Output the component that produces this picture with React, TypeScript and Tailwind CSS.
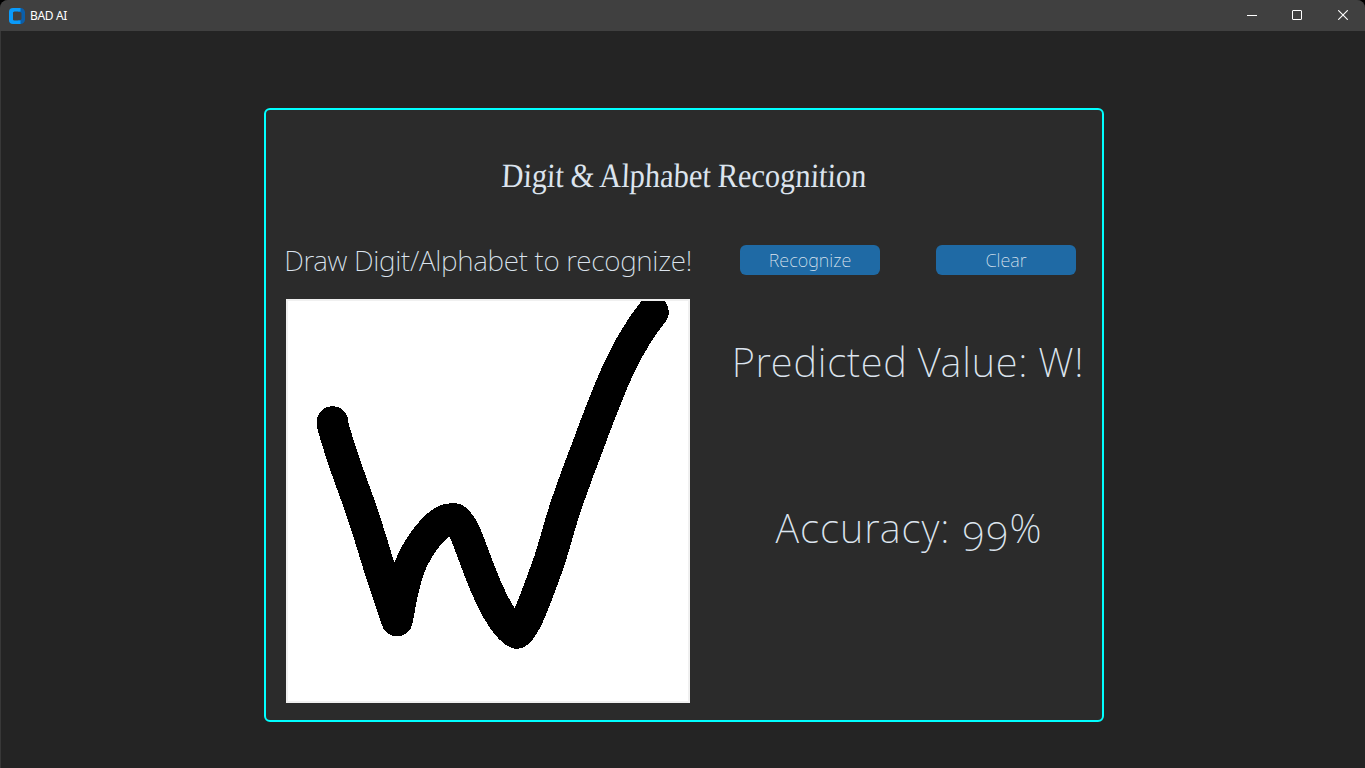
function TitleBar() {
  return (
    <header className="flex h-[31px] w-full shrink-0 items-center justify-between bg-[#404040] pl-2">
      <div className="flex items-center gap-1">
        <svg width="18" height="18" viewBox="0 0 18 18" aria-hidden="true">
          <path d="M10 1h2.5A4.5 4.5 0 0 1 17 5.500v7a4.500 4.500 0 0 1-4.500 4.500H10z" fill="#0b5ea8" />
          <path d="M5 1h7.500v3.500H6.500a1.500 1.500 0 0 0-1.500 1.500v6a1.500 1.500 0 0 0 1.500 1.500h6V17H5a4 4 0 0 1-4-4V5a4 4 0 0 1 4-4z" fill="#0a9bfb" />
          <rect x="5" y="5" width="8.500" height="8" rx="1.500" fill="#404040" />
        </svg>
        <span className="text-[12px] leading-4 tracking-[-0.35px] text-white">BAD AI</span>
      </div>
      <div className="flex h-[30px] self-start">
        <button className="grid w-[45px] place-items-center" aria-label="Minimize">
          <svg width="10" height="10" viewBox="0 0 10 10"><path d="M0 5.500h10" stroke="#fff" /></svg>
        </button>
        <button className="grid w-[45px] place-items-center" aria-label="Maximize">
          <svg width="10" height="10" viewBox="0 0 10 10"><rect x=".5" y=".5" width="9" height="9" rx=".5" fill="none" stroke="#fff" /></svg>
        </button>
        <button className="grid w-[46px] place-items-center pl-px" aria-label="Close">
          <svg width="10" height="10" viewBox="0 0 10 10"><path d="M.2.2l9.600 9.600M9.800.2L.2 9.800" stroke="#fff" strokeWidth="1.1" /></svg>
        </button>
      </div>
    </header>
  );
}

function DrawingCanvas() {
  return (
    <div className="h-[404px] w-[404px] border-2 border-[#f0f0f0] bg-white">
      <svg width="400" height="400" viewBox="288 301 400 400" className="block" shapeRendering="crispEdges">
        <path
          d="M332.500 422L333 426C340 452 348 473 357 498C367 525 374 551 382 576L397 620.500C400 606 402 590 407 575C412 557 424 538 437 526C444 520 448 518.500 455 519C461 524 465 532 468 540C473 553 481 576 487 589C495 608 508 630 517 633C527 627 541 583 549 562C557 537 561 519 569 497C576 477 582 461 589 443C594 429 599 416 605 401C610 388 615 376 621 364C630 345 641 327 653 312"
          fill="none"
          stroke="#000"
          strokeWidth="31.5"
          strokeLinecap="round"
          strokeLinejoin="round"
        />
      </svg>
    </div>
  );
}

export default function App() {
  return (
    <div className="h-screen w-full overflow-hidden bg-black font-['Noto_Sans',sans-serif]">
      <div className="flex h-full flex-col overflow-hidden rounded-t-lg bg-[#242424]">
        <TitleBar />
        <main className="flex flex-1 justify-center border-l border-[#383838] pt-[77px] pl-[2px]">
          <section className="h-[614px] w-[840px] rounded-[6px] border-2 border-[#00ffff] bg-[#2b2b2b] font-extralight text-[#dce4ee]">
            <h1 className="flex h-[131px] scale-x-[0.895] -skew-x-3 items-center justify-center whitespace-nowrap font-['Liberation_Serif',serif] text-[34px] font-normal [word-spacing:-1px]">
              Digit &amp; Alphabet Recognition
            </h1>
            <div className="grid grid-cols-[444px_392px]">
              <div className="flex flex-col items-center">
                <p className="flex h-[38px] items-center whitespace-nowrap text-[28px] tracking-[-0.3px]">
                  Draw Digit/Alphabet to recognize!
                </p>
                <div className="pt-5">
                  <DrawingCanvas />
                </div>
              </div>
              <div className="flex flex-col items-center pl-1">
                <div className="flex h-[38px] items-center gap-14">
                  <button className="flex h-[30px] w-[140px] items-center justify-center rounded-[6px] bg-[#1f6aa5] text-[18px]">
                    Recognize
                  </button>
                  <button className="flex h-[30px] w-[140px] items-center justify-center rounded-[6px] bg-[#1f6aa5] text-[18px]">
                    Clear
                  </button>
                </div>
                <p className="flex h-[166px] items-center whitespace-nowrap text-[40px] tracking-[0.75px] [word-spacing:-1px]">
                  Predicted Value: W!
                </p>
                <p className="flex h-[166px] items-center whitespace-pre pl-0.5 text-[40px] tracking-[1px]">
                  Accuracy: <span className="translate-y-[8px]">99</span>%
                </p>
              </div>
            </div>
          </section>
        </main>
      </div>
    </div>
  );
}
